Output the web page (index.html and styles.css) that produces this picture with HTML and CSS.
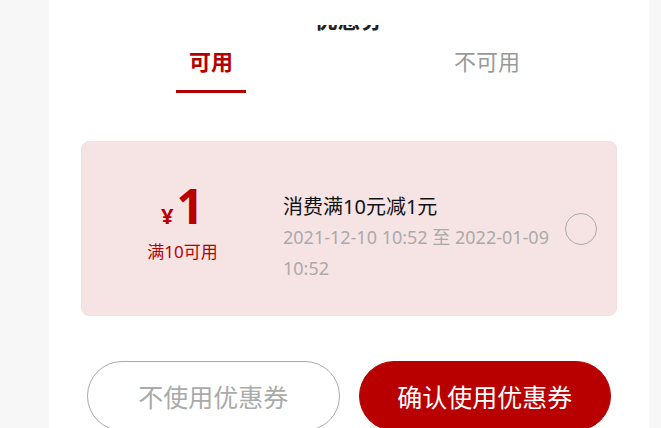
FILE: index.html
```html
<!doctype html>
<html>
<head>
	<meta charset='utf-8'>
	<title>优惠券</title>

	<link rel="stylesheet" href="styles.css">
</head>
<body>

	<div class='panel'>
		<div class='title-clip'>
			<h1 class='title'>优惠券</h1>
		</div>

		<ul class='tabs'>
			<li class='tab active'>可用</li>
			<li class='tab'>不可用</li>
		</ul>

		<div class='coupon'>
			<div class='coupon-value'>
				<div class='amount'><span class='currency'>¥</span><span class='number'>1</span></div>
				<div class='condition'>满10可用</div>
			</div>
			<div class='coupon-info'>
				<div class='coupon-name'>消费满10元减1元</div>
				<div class='coupon-date'>2021-12-10 10:52 至 2022-01-09 10:52</div>
			</div>
			<span class='radio'></span>
		</div>

		<div class='actions'>
			<button class='btn btn-plain'>不使用优惠券</button>
			<button class='btn btn-primary'>确认使用优惠券</button>
		</div>
	</div>

</body>
</html>
```

FILE: styles.css
```css
body {
	margin: 0;
	background: #f7f7f7;
	font-family: "Noto Sans", "Noto Sans CJK SC", sans-serif;
	color: #222;
}

ul {
	list-style: none;
	padding: 0;
	margin: 0;
}

/* white sheet */
.panel {
	width: 600px;
	margin-left: 49px;
	min-height: 100vh;
	background: #fff;
	overflow: hidden;
}

/* the title is scrolled mostly out of view */
.title-clip {
	margin-top: 25px;
	height: 6px;
	overflow: hidden;
	text-align: center;
}

.title {
	margin: -17px 0 0;
	font-size: 23px;
	line-height: 23px;
	font-weight: bold;
	color: #222;
}

/* tabs */
.tabs {
	display: flex;
	margin: 0 24px;
}

.tab {
	flex: 1;
	text-align: center;
	padding-top: 16px;
	font-size: 22px;
	line-height: 28px;
	color: #999;
}

.tab::after {
	content: '';
	display: block;
	width: 70px;
	height: 3px;
	margin: 15px auto 0;
	background: transparent;
}

.tab.active {
	color: #b30000;
	font-weight: bold;
}

.tab.active::after {
	background: #b30000;
}

/* coupon card */
.coupon {
	display: flex;
	align-items: center;
	height: 175px;
	margin: 48px 32px 0;
	background: #f6e4e5;
	border: 1px solid #f3dfe0;
	border-radius: 8px;
	box-sizing: border-box;
}

.coupon-value {
	width: 201px;
	margin-bottom: 12px;
	text-align: center;
	color: #b80000;
}

.amount {
	height: 48px;
	font-weight: bold;
}

.currency {
	font-size: 22px;
	line-height: 48px;
	margin-right: 3px;
}

.number {
	font-size: 48px;
	line-height: 48px;
}

.condition {
	margin-top: 11px;
	font-size: 17px;
	line-height: 22px;
}

.coupon-info {
	flex: 1;
	margin-top: 19px;
}

.coupon-name {
	font-size: 20px;
	line-height: 30px;
	color: #111;
}

.coupon-date {
	font-size: 18px;
	line-height: 31px;
	color: #aaa;
}

.radio {
	flex: none;
	width: 30px;
	height: 30px;
	margin: 0 19px 0 11px;
	border: 1px solid #aaa;
	border-radius: 50%;
}

/* bottom buttons */
.actions {
	display: flex;
	gap: 19px;
	margin: 45px 38px 0;
}

.btn {
	flex: 1;
	height: 70px;
	border-radius: 35px;
	font-family: inherit;
	font-size: 25px;
	padding: 0;
}

.btn-plain {
	background: #fff;
	border: 1px solid #aaa;
	color: #aaa;
}

.btn-primary {
	background: #b90000;
	border: 1px solid #b90000;
	color: #fff;
}
```
